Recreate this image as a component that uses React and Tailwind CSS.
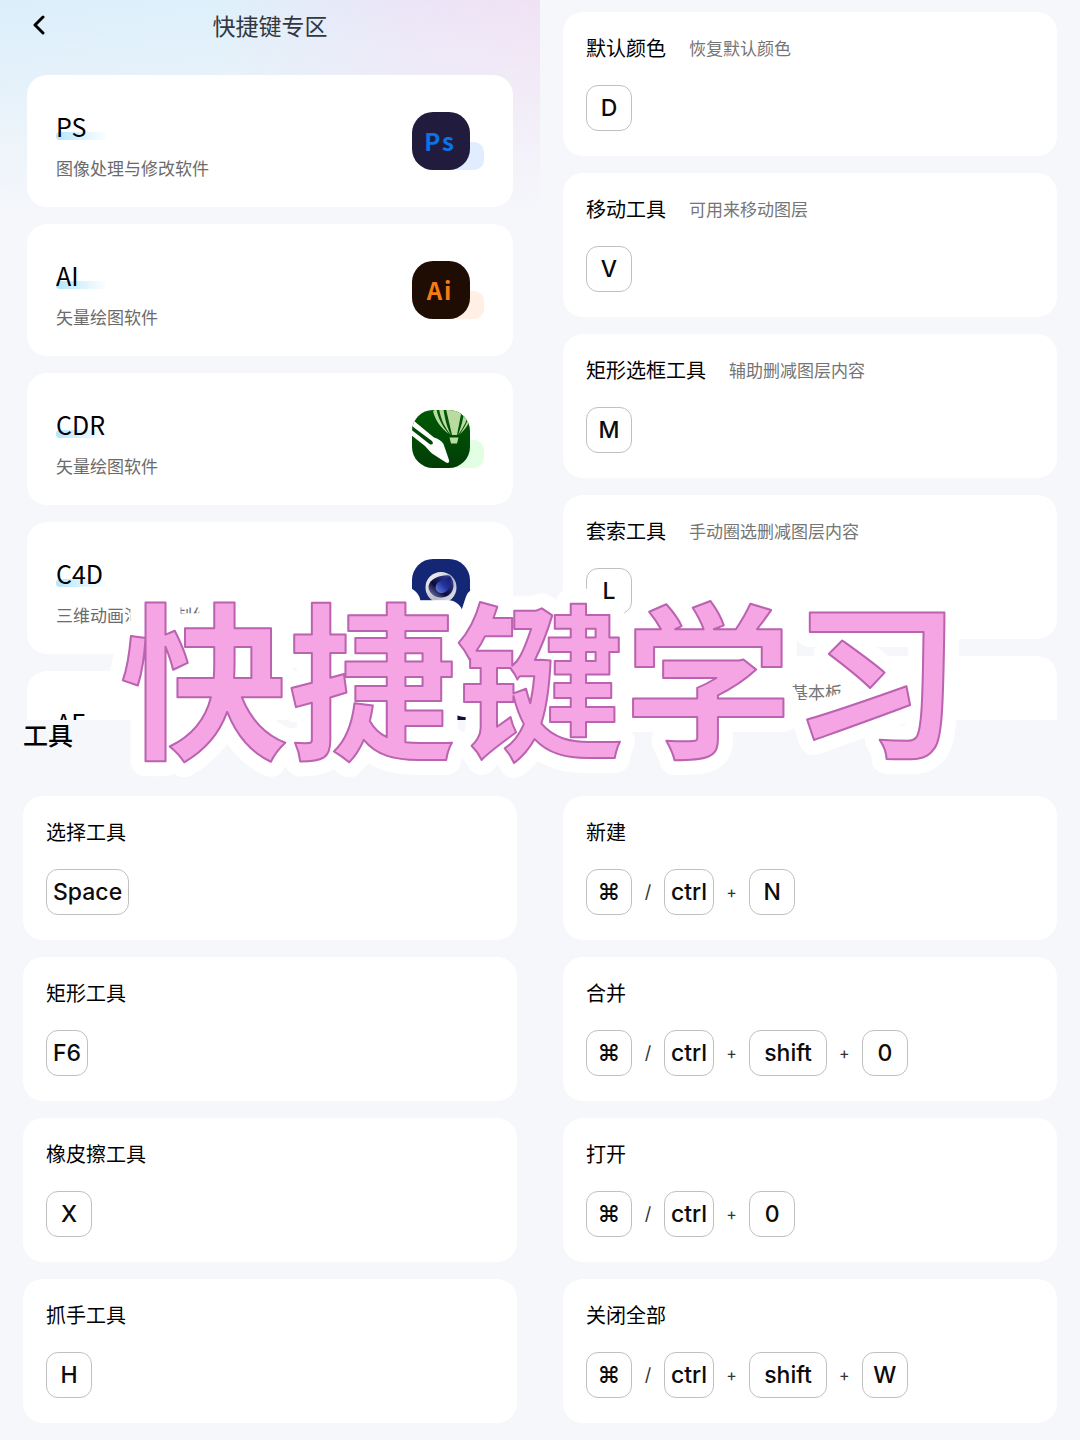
import clsx from 'clsx'

const SOFTWARE = [
  { name: 'PS', desc: '图像处理与修改软件', icon: PsIcon, tint: 'bg-[#e0edff]' },
  { name: 'AI', desc: '矢量绘图软件', icon: AiIcon, tint: 'bg-[#ffefe5]' },
  { name: 'CDR', desc: '矢量绘图软件', icon: CdrIcon, tint: 'bg-[#e2ffe3]' },
  { name: 'C4D', desc: '三维动画渲染和制作软件', icon: C4dIcon, tint: 'bg-[#e6e6fb]' },
  { name: 'AE', desc: '视频后期处理软件', icon: AeIcon, tint: 'bg-[#e6e6fb]' },
]

const BASIC_TOOLS = [
  { name: '默认颜色', desc: '恢复默认颜色', keys: ['D'] },
  { name: '移动工具', desc: '可用来移动图层', keys: ['V'] },
  { name: '矩形选框工具', desc: '辅助删减图层内容', keys: ['M'] },
  { name: '套索工具', desc: '手动圈选删减图层内容', keys: ['L'] },
  { name: '画板工具', desc: '用于创建图像基本板', keys: ['C'] },
]

const TOOLS = [
  { name: '选择工具', keys: ['Space'] },
  { name: '矩形工具', keys: ['F6'] },
  { name: '橡皮擦工具', keys: ['X'] },
  { name: '抓手工具', keys: ['H'] },
]

const FILE_ACTIONS = [
  { name: '新建', keys: ['⌘', '/', 'ctrl', '+', 'N'] },
  { name: '合并', keys: ['⌘', '/', 'ctrl', '+', 'shift', '+', '0'] },
  { name: '打开', keys: ['⌘', '/', 'ctrl', '+', '0'] },
  { name: '关闭全部', keys: ['⌘', '/', 'ctrl', '+', 'shift', '+', 'W'] },
]

function LetterIcon({ bg, color, children }) {
  return (
    <svg viewBox="0 0 58 58" className="w-full h-full">
      <rect width="58" height="58" rx="21" fill={bg} />
      <text
        x="28" y="39" textAnchor="middle" fill={color}
        fontFamily="'Noto Sans CJK SC', sans-serif" fontWeight="700" fontSize="24" letterSpacing="2"
      >
        {children}
      </text>
    </svg>
  )
}

function PsIcon() {
  return <LetterIcon bg="#211c3d" color="#0b73ea">Ps</LetterIcon>
}

function AiIcon() {
  return <LetterIcon bg="#1f0c02" color="#f57c14">Ai</LetterIcon>
}

function AeIcon() {
  return <LetterIcon bg="#0e0f3d" color="#9a9bff">Ae</LetterIcon>
}

function CdrIcon() {
  return (
    <svg viewBox="0 0 58 58" className="w-full h-full">
      <defs>
        <clipPath id="cdr-clip"><rect width="58" height="58" rx="21" /></clipPath>
        <linearGradient id="cdr-bg" x1="0" y1="0" x2="0" y2="1">
          <stop offset="0" stopColor="#005a05" />
          <stop offset="1" stopColor="#003d06" />
        </linearGradient>
      </defs>
      <g clipPath="url(#cdr-clip)">
        <rect width="58" height="58" fill="url(#cdr-bg)" />
        {/* balloon */}
        <g fill="#b8dba0">
          <path d="M34 -1H50L45 25H40Z" />
          <path d="M27 -1H31.500C33 10 35 17 39 25C33 18 29 10 27 -1Z" />
          <path d="M21 1L24.500 -1C26 8 30 16 37 24C29 18 23 10 21 1Z" />
          <path d="M52.500 -1H58C56 9 52 17 46 25C49 17 51.500 9 52.500 -1Z" />
          <path d="M60 5C58 12 54 19 47.500 24.500C53 17 56 11 58 3Z" />
          <path d="M37.500 27.500H46.500L45 33.500H39Z" />
        </g>
        {/* pen */}
        <path d="M-1 9.500C1 10 3 11.500 5 13.500L22 27.500C26 28.500 29.500 31 31.500 34L37 50C37.500 52.500 36.500 53.500 34 52.500L20 43.500C17 41 15 38 13 36L-1 25Z" fill="#fff" />
        <path d="M-1 15L2.500 18L20 31C22 33.500 20.500 35.500 17.500 34L-1 19.500Z" fill="#00480a" />
      </g>
    </svg>
  )
}

function C4dIcon() {
  return (
    <svg viewBox="0 0 58 58" className="w-full h-full">
      <defs>
        <linearGradient id="c4d-ring" x1="0" y1="0" x2="1" y2="1">
          <stop offset="0" stopColor="#ffffff" />
          <stop offset="0.6" stopColor="#b9bac6" />
          <stop offset="1" stopColor="#f3f3f6" />
        </linearGradient>
        <linearGradient id="c4d-ball" x1="0" y1="1" x2="1" y2="0">
          <stop offset="0" stopColor="#8a8ed2" />
          <stop offset="0.4" stopColor="#0a0c35" />
          <stop offset="1" stopColor="#3a46b0" />
        </linearGradient>
        <linearGradient id="c4d-core" x1="1" y1="0" x2="0" y2="1">
          <stop offset="0" stopColor="#141a63" />
          <stop offset="0.5" stopColor="#2434a0" />
          <stop offset="1" stopColor="#6c8ae6" />
        </linearGradient>
      </defs>
      <rect width="58" height="58" rx="21" fill="#132774" />
      <circle cx="29" cy="28.500" r="15.500" fill="url(#c4d-ring)" />
      <path d="M37.500 16.500C30 15.500 18 19 16.500 27C16 34 23 39 30 38.500C37 38 41 33 41.500 27C41.500 22 40 18.500 37.500 16.500Z" fill="url(#c4d-ball)" />
      <path d="M38 17.500C35 20 24 21 23.500 28C23.500 32 27 34.500 31 34C36.500 33 40.500 25 38 17.500Z" fill="url(#c4d-core)" />
    </svg>
  )
}

function SoftwareCard({ name, desc, icon: Icon, tint }) {
  return (
    <li className="h-[132px] shrink-0 bg-white rounded-[20px] px-[29px] flex items-center justify-between">
      <div className="pt-2">
        <h2 className="relative isolate text-[25px] leading-8 text-black">
          {name}
          <span className="absolute left-0 bottom-0.5 -z-10 w-[52px] h-2 rounded bg-gradient-to-r from-[#b3e6fd] to-white" />
        </h2>
        <p className="mt-3.5 text-[17px] leading-6 text-[#6b6b6b]">{desc}</p>
      </div>
      <div className="relative isolate w-[72px] h-[58px]">
        <span className={clsx('absolute right-0 bottom-0 -z-10 w-9 h-7 rounded-[10px]', tint)} />
        <div className="w-[58px] h-[58px]">
          <Icon />
        </div>
      </div>
    </li>
  )
}

function keyWidth(k) {
  if (k.length === 1) return 'w-[46px]'
  return k === 'shift' ? 'px-3.5' : 'px-1.5'
}

function Keys({ keys }) {
  return (
    <div className="flex items-center font-['Inter',sans-serif]">
      {keys.map((k, i) => {
        if (k === '/') return <span key={i} className="w-8 text-center text-lg leading-6 text-[#333]">/</span>
        if (k === '+') return <span key={i} className="w-[35px] text-center text-base leading-6 text-[#333]">+</span>
        return (
          <kbd
            key={i}
            className={clsx(
              "h-[46px] rounded-xl border border-[#c0c0c0] flex items-center justify-center font-['Inter',sans-serif] font-medium text-[23px] text-[#0c0c0c]",
              keyWidth(k)
            )}
          >
            {k}
          </kbd>
        )
      })}
    </div>
  )
}

function ShortcutCard({ name, desc, keys }) {
  return (
    <li className="h-36 shrink-0 bg-white rounded-[20px] px-[23px] pt-[22px]">
      <div className="flex items-center gap-[23px] h-7 mb-[23px]">
        <h3 className="text-xl leading-7 text-black">{name}</h3>
        {desc && <p className="text-[17px] leading-7 text-[#757575]">{desc}</p>}
      </div>
      <Keys keys={keys} />
    </li>
  )
}

function ShortcutList({ items }) {
  return (
    <ul className="flex flex-col gap-[17px]">
      {items.map(item => <ShortcutCard key={item.name} {...item} />)}
    </ul>
  )
}

function Banner() {
  return (
    <h1 className="absolute inset-x-0 top-[50vh] h-0 flex items-center justify-center pointer-events-none">
      <svg width="900" height="320" viewBox="0 0 900 320" className="shrink-0">
        <g
          fontFamily="'Noto Sans CJK SC', sans-serif" fontWeight="700" fontSize="168"
          textAnchor="middle" strokeLinejoin="round"
        >
          <text x="450" y="186" fill="#fff" stroke="#fff" strokeWidth="30" aria-hidden="true">快捷键学习</text>
          <text x="450" y="186" fill="#f6a5e4" stroke="#bb63b1" strokeWidth="2">快捷键学习</text>
        </g>
      </svg>
    </h1>
  )
}

export default function App() {
  return (
    <div className="relative min-h-screen grid grid-cols-2 content-start bg-[#f5f7fb] overflow-hidden font-['Noto_Sans_CJK_SC',sans-serif]">
      <section className="h-[50vh] overflow-hidden px-[27px] bg-[linear-gradient(to_bottom,transparent,#f5f7fb_210px),linear-gradient(to_right,#dbeefa,#def0fa_40%,#ebe5f7_75%,#f0e2f4)]">
        <header className="grid grid-cols-3 items-center h-[50px] mb-[25px]">
          <button aria-label="返回" className="justify-self-start w-6 h-8 flex items-center justify-center">
            <svg width="14" height="20" viewBox="0 0 14 20" fill="none" stroke="#000" strokeWidth="3" strokeLinecap="round" strokeLinejoin="round">
              <path d="M11 2L3 10L11 18" />
            </svg>
          </button>
          <h2 className="text-[23px] leading-8 text-center text-[#333840] whitespace-nowrap">快捷键专区</h2>
        </header>
        <ul className="flex flex-col gap-[17px]">
          {SOFTWARE.map(s => <SoftwareCard key={s.name} {...s} />)}
        </ul>
      </section>

      <section className="h-[50vh] overflow-hidden px-[23px] pt-3">
        <ShortcutList items={BASIC_TOOLS} />
      </section>

      <section className="px-[23px] pb-4">
        <h2 className="h-[76px] text-[25px] leading-7 font-medium text-black">工具</h2>
        <ShortcutList items={TOOLS} />
      </section>

      <section className="px-[23px] pb-4 pt-[76px]">
        <ShortcutList items={FILE_ACTIONS} />
      </section>

      <Banner />
    </div>
  )
}
